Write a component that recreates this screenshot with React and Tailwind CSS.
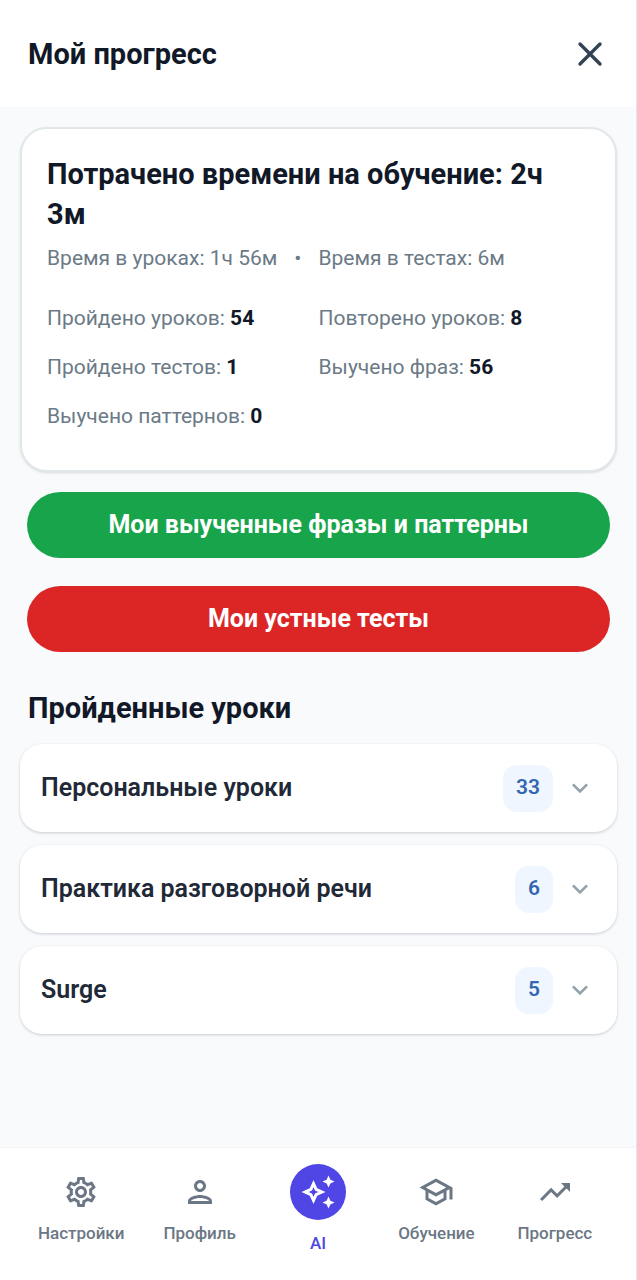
import { useState } from "react";
import {
  MdExpandMore,
  MdOutlineSettings,
  MdOutlinePerson,
  MdOutlineAutoAwesome,
  MdOutlineSchool,
  MdTrendingUp,
} from "react-icons/md";
import { X } from "lucide-react";

const stats = [
  { label: "Пройдено уроков", value: 54 },
  { label: "Повторено уроков", value: 8 },
  { label: "Пройдено тестов", value: 1 },
  { label: "Выучено фраз", value: 56 },
  { label: "Выучено паттернов", value: 0 },
];

const groups = [
  { id: "personal", title: "Персональные уроки", count: 33 },
  { id: "speaking", title: "Практика разговорной речи", count: 6 },
  { id: "surge", title: "Surge", count: 5 },
];

const tabs = [
  { id: "settings", label: "Настройки", icon: MdOutlineSettings },
  { id: "profile", label: "Профиль", icon: MdOutlinePerson },
  { id: "ai", label: "AI", icon: MdOutlineAutoAwesome, main: true },
  { id: "learning", label: "Обучение", icon: MdOutlineSchool },
  { id: "progress", label: "Прогресс", icon: MdTrendingUp },
];

export default function App() {
  const [openId, setOpenId] = useState(null);

  return (
    <div className="flex flex-col min-h-screen bg-[#f8fafc] border-r border-gray-200 text-[#111827] font-['Roboto',sans-serif]">
      {/* Header */}
      <header className="flex items-center justify-between h-[107px] pl-7 pr-[26px] bg-white">
        <h1 className="text-[29px] leading-10 font-bold">Мой прогресс</h1>
        <button type="button" aria-label="Закрыть" className="text-[#334155]">
          <X size={40} strokeWidth={2} />
        </button>
      </header>

      <main className="flex-1 pl-5 pr-[19px] pt-5">
        {/* Summary */}
        <section className="px-[25px] pt-[25px] pb-10 bg-white border-2 border-[#e2e8ea] rounded-[27px] shadow-sm">
          <h2 className="pr-8 text-[29px] leading-10 font-bold">
            Потрачено времени на обучение: 2ч 3м
          </h2>
          <p className="flex gap-[17px] mt-[10px] text-[21px] leading-7 text-[#6b7a86]">
            <span>Время в уроках: 1ч 56м</span>
            <span>•</span>
            <span>Время в тестах: 6м</span>
          </p>
          <ul className="grid grid-cols-2 gap-y-[21px] mt-8 text-[21px] leading-7 text-[#6b7a86]">
            {stats.map((s) => (
              <li key={s.label}>
                {s.label}: <span className="font-bold text-[#111827]">{s.value}</span>
              </li>
            ))}
          </ul>
        </section>

        <div className="flex flex-col gap-7 px-[7px] mt-5">
          <button type="button" className="h-[66px] rounded-full bg-[#18a44b] text-white text-[25px] font-bold">
            Мои выученные фразы и паттерны
          </button>
          <button type="button" className="h-[66px] rounded-full bg-[#dc2626] text-white text-[25px] font-bold">
            Мои устные тесты
          </button>
        </div>

        {/* Finished lessons */}
        <h2 className="px-2 mt-9 text-[29px] leading-10 font-bold">Пройденные уроки</h2>
        <div className="flex flex-col gap-[13px] mt-4">
          {groups.map((g) => (
            <button
              key={g.id}
              type="button"
              aria-expanded={openId === g.id}
              onClick={() => setOpenId(openId === g.id ? null : g.id)}
              className="flex items-center h-[88px] pl-[21px] pr-[21px] bg-white rounded-[22px] shadow-[0_1px_3px_rgba(15,23,42,0.2)] text-left"
            >
              <span className="flex-1 text-[25px] font-semibold text-[#1f2937]">{g.title}</span>
              <span className="flex items-center h-[47px] px-[13px] mr-[11px] rounded-[14px] bg-[#eff6ff] text-[21px] font-semibold text-[#3566b0]">
                {g.count}
              </span>
              <MdExpandMore
                size={32}
                className={openId === g.id ? "text-[#94a3ab] rotate-180" : "text-[#94a3ab]"}
              />
            </button>
          ))}
        </div>
      </main>

      {/* Bottom tabs */}
      <nav className="flex h-[133px] px-[22px] bg-white border-t border-gray-100">
        {tabs.map(({ id, label, icon: Icon, main }) => (
          <a
            key={id}
            href={`#${id}`}
            className={
              main
                ? "flex-1 flex flex-col items-center gap-[11px] pt-4 text-[#4f46e5]"
                : "flex-1 flex flex-col items-center gap-[11px] pt-[26px] text-[#6b7785]"
            }
          >
            {main ? (
              <span className="flex items-center justify-center w-14 h-14 rounded-full bg-[#4f46e5] text-white">
                <Icon size={36} />
              </span>
            ) : (
              <Icon size={36} />
            )}
            <span className="text-[17px] leading-6 font-medium">{label}</span>
          </a>
        ))}
      </nav>
    </div>
  );
}
